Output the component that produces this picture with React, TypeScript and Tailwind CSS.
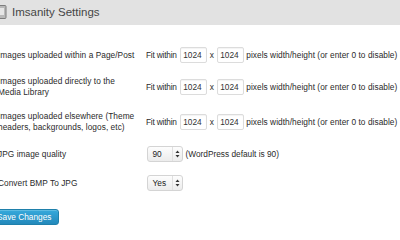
import React from "react";

function SizeInput({ value }: { value: string }) {
  return (
    <div className="h-[16px] w-[27px] rounded-[2px] border border-[#dcdcdc] bg-white pl-[2.5px] text-[8.3px] leading-[14px] text-[#333] shadow-[inset_0_1px_1px_rgba(0,0,0,0.05)]">
      {value}
    </div>
  );
}

function Arrows() {
  return (
    <svg width="5" height="8" viewBox="0 0 5 8">
      <path d="M2.5 0.5 L4.5 3 L0.5 3 Z" fill="#333" />
      <path d="M2.5 7.5 L4.5 5 L0.5 5 Z" fill="#333" />
    </svg>
  );
}

function Select({ value }: { value: string }) {
  return (
    <div className="flex h-[16px] w-[36px] items-center rounded-[3px] border border-[#d4d4d4] bg-gradient-to-b from-[#fdfdfd] to-[#ececec] text-[8.3px] text-[#222]">
      <span className="flex-1 pl-[4.5px] leading-[14px]">{value}</span>
      <span className="flex h-full w-[10px] items-center justify-center border-l border-[#e0e0e0]">
        <Arrows />
      </span>
    </div>
  );
}

function FitWithin() {
  return (
    <div className="flex items-center text-[8.3px] text-[#2a2a2a]">
      <span className="-ml-[1px] mr-[3px] tracking-[-0.2px]">Fit within</span>
      <SizeInput value="1024" />
      <span className="w-[10px] text-center">x</span>
      <SizeInput value="1024" />
      <span className="ml-[2.5px] whitespace-nowrap tracking-[0.05px]">pixels width/height (or enter 0 to disable)</span>
    </div>
  );
}

function Row({ label, children }: { label: React.ReactNode; children: React.ReactNode }) {
  return (
    <div className="flex items-center py-[6.5px]">
      <div className="w-[149px] shrink-0 whitespace-nowrap text-[8.3px] leading-[11px] tracking-[0.05px] text-[#2a2a2a]">{label}</div>
      <div className="flex items-center">{children}</div>
    </div>
  );
}

export default function App() {
  return (
    <div className="relative h-[240px] w-[400px] overflow-hidden bg-white font-['Liberation_Sans',Arial,sans-serif]">
      {/* Header */}
      <div className="flex h-[25px] items-center bg-[#e2e2e2]">
        <svg width="7" height="14" viewBox="0 0 7 14" className="-mt-[1px]">
          <rect x="-1" y="0.5" width="7" height="13" rx="1" fill="#b9b9b9" stroke="#7d7d7d" />
          <rect x="0" y="3" width="4" height="7" fill="#e6e6e6" />
        </svg>
        <h2 className="ml-[5px] text-[11.5px] leading-none text-[#464646]">Imsanity Settings</h2>
      </div>

      {/* Form */}
      <div className="-ml-[2px] pt-[15.5px]">
        <Row label="Images uploaded within a Page/Post">
          <FitWithin />
        </Row>
        <Row
          label={
            <>
              Images uploaded directly to the
              <br />
              Media Library
            </>
          }
        >
          <FitWithin />
        </Row>
        <Row
          label={
            <>
              Images uploaded elsewhere (Theme
              <br />
              headers, backgrounds, logos, etc)
            </>
          }
        >
          <FitWithin />
        </Row>
        <Row label="JPG image quality">
          <Select value="90" />
          <span className="ml-[2.5px] text-[8.3px] text-[#2a2a2a]">(WordPress default is 90)</span>
        </Row>
        <Row label="Convert BMP To JPG">
          <Select value="Yes" />
        </Row>

        <div className="mt-[11px] flex">
          <button className="-ml-[9px] h-[16px] rounded-[3px] border border-[#1f80ab] bg-gradient-to-b from-[#36a9dc] to-[#2389bb] px-[7px] text-[8.3px] leading-[14px] text-white shadow-[inset_0_1px_0_rgba(120,200,230,0.6)]">
            Save Changes
          </button>
        </div>
      </div>
    </div>
  );
}
